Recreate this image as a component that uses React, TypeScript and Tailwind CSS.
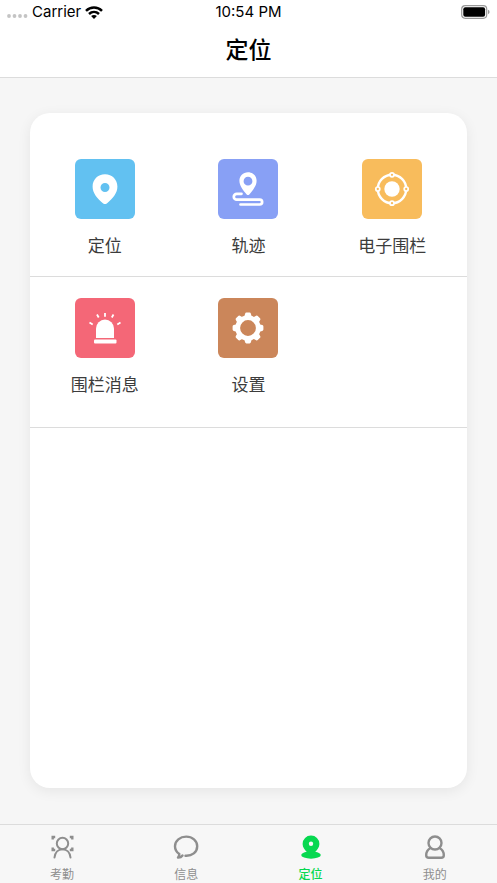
import React from 'react';

const LocateIcon = () => (
  <svg viewBox="0 0 60 60" className="size-15" aria-hidden="true">
    <path
      fill="#fff"
      fillRule="evenodd"
      d="M30 15.200c-7.200 0-12.400 5.400-12.400 12.300 0 6.600 4.300 11.600 10.600 16.900q1.800 1.300 3.600 0c6.300-5.300 10.600-10.300 10.600-16.900 0-6.900-5.200-12.300-12.400-12.300zM30 24a4.500 4.500 0 1 1 0 9 4.500 4.500 0 0 1 0-9z"
    />
  </svg>
);

const TrackIcon = () => (
  <svg viewBox="0 0 60 60" className="size-15" aria-hidden="true">
    <path
      fill="#fff"
      fillRule="evenodd"
      d="M30 13.200c-5 0-8.600 3.700-8.600 8.500 0 4.800 3.500 9.400 7.300 13.700q1.300 1.200 2.600 0c3.800-4.300 7.300-8.900 7.300-13.700 0-4.800-3.600-8.500-8.600-8.500zM30 17.800a4.400 4.400 0 1 1 0 8.800 4.400 4.400 0 0 1 0-8.800z"
    />
    <path
      fill="none"
      stroke="#fff"
      strokeWidth="2.700"
      strokeLinecap="round"
      d="M23.500 34.800h-4.800a2.900 2.900 0 0 0 0 5.800h23a2.400 2.400 0 0 1 0 4.900H22.500"
    />
  </svg>
);

const FenceIcon = () => (
  <svg viewBox="0 0 60 60" className="size-15" aria-hidden="true">
    <circle cx="30" cy="30" r="7.700" fill="#fff" />
    <circle cx="30" cy="30" r="14.200" fill="none" stroke="#fff" strokeWidth="2.400" />
    <g fill="#f8bc5c" stroke="#fff" strokeWidth="1.700">
      <circle cx="30" cy="15.800" r="2" />
      <circle cx="44.200" cy="30" r="2" />
      <circle cx="30" cy="44.200" r="2" />
      <circle cx="15.800" cy="30" r="2" />
    </g>
  </svg>
);

const AlarmIcon = () => (
  <svg viewBox="0 0 60 60" className="size-15" aria-hidden="true">
    <path fill="#fff" d="M21 40v-9.500a9 9 0 0 1 18 0V40z" />
    <rect x="19" y="41.600" width="22.500" height="3.900" rx="1" fill="#fff" />
    <path
      stroke="#fff"
      strokeWidth="1.800"
      d="M30 15v3.800M22 16.500l1.700 3M38.500 16.500L36.800 19.500M14.500 24.500l3.200 2M45.500 24.500l-3.200 2"
    />
  </svg>
);

const SettingsIcon = () => (
  <svg viewBox="0 0 60 60" className="size-15" aria-hidden="true">
    <circle cx="30" cy="30" r="10.300" fill="none" stroke="#fff" strokeWidth="4.800" />
    <g fill="#fff">
      {[0, 45, 90, 135, 180, 225, 270, 315].map((angle) => (
        <path key={angle} transform={`rotate(${angle} 30 30)`} d="M26.200 19l.9-3.300q.3-1.100 1.300-1.100h3.200q1 0 1.300 1.100l.9 3.300z" />
      ))}
    </g>
  </svg>
);

const AttendanceIcon = () => (
  <svg viewBox="0 0 24 24" className="size-6" fill="none" stroke="currentColor" strokeWidth="2" aria-hidden="true">
    <circle cx="12.500" cy="8.500" r="5.700" />
    <path strokeLinecap="round" d="M4.500 22.500c.5-5 3.800-8.300 8-8.300s7.500 3.300 8 8.300" />
    <path strokeWidth="2.400" d="M2.700 4.500V2h2.500M22.300 4.500V2h-2.500M2.700 12.500V15h2.500M22.300 12.500V15h-2.500" />
  </svg>
);

const MessageIcon = () => (
  <svg viewBox="0 0 26 24" className="h-6 w-6.5" fill="none" stroke="currentColor" strokeWidth="2.400" strokeLinecap="round" strokeLinejoin="round" aria-hidden="true">
    <path d="M12.500 20.700c6.500.4 11.700-3.500 11.700-9.500C24.200 5.600 19.300 1.600 13.200 1.600S2 5.600 2 11.200c0 3.200 1.600 6 4.300 7.700.2 1.500-.3 2.500-1.300 3.600 2 .1 3.500-.6 4.500-2" />
  </svg>
);

const PositionIcon = () => (
  <svg viewBox="0 0 24 24" className="size-6" fill="currentColor" aria-hidden="true">
    <ellipse cx="12" cy="20" rx="9.800" ry="3.700" />
    <path
      fillRule="evenodd"
      d="M12 .5a8.300 8.300 0 0 0-8.400 8.400c0 3.600 2.300 6 4.400 8.100l4 4 4-4c2.100-2.100 4.400-4.500 4.400-8.100A8.300 8.300 0 0 0 12 .5zm0 6a2.200 2.200 0 1 1 0 4.400 2.200 2.200 0 0 1 0-4.400z"
    />
  </svg>
);

const MineIcon = () => (
  <svg viewBox="0 0 24 24" className="size-6" fill="none" stroke="currentColor" strokeWidth="2.400" strokeLinejoin="round" aria-hidden="true">
    <circle cx="12" cy="8" r="6.500" />
    <path d="M7.200 13.200C4.400 14.700 3.200 17 3.200 20.200q0 2.600 2.600 2.600h12.400q2.600 0 2.600-2.600c0-3.200-1.200-5.500-4-7" />
  </svg>
);

const menuRows = [
  {
    className: 'pt-[46px] pb-4',
    items: [
      { label: '定位', color: 'bg-[#62c1f1]', icon: <LocateIcon /> },
      { label: '轨迹', color: 'bg-[#88a0f5]', icon: <TrackIcon /> },
      { label: '电子围栏', color: 'bg-[#f8bc5c]', icon: <FenceIcon /> },
    ],
  },
  {
    className: 'pt-[21px] pb-7',
    items: [
      { label: '围栏消息', color: 'bg-[#f46777]', icon: <AlarmIcon /> },
      { label: '设置', color: 'bg-[#cb865a]', icon: <SettingsIcon /> },
    ],
  },
];

const tabs = [
  { label: '考勤', icon: <AttendanceIcon /> },
  { label: '信息', icon: <MessageIcon /> },
  { label: '定位', icon: <PositionIcon />, active: true },
  { label: '我的', icon: <MineIcon /> },
];

const StatusBar: React.FC = () => (
  <div className="grid h-6 grid-cols-3 items-center px-[7px] font-[Inter,sans-serif] text-[15px]">
    <div className="flex items-center">
      <svg viewBox="0 0 21 4" className="mt-2 mr-1 h-1 w-[21px]" fill="#c4c4c4" aria-hidden="true">
        <circle cx="2" cy="2" r="1.900" />
        <circle cx="7.500" cy="2" r="1.900" />
        <circle cx="13" cy="2" r="1.900" />
        <circle cx="18.500" cy="2" r="1.900" />
      </svg>
      <span>Carrier</span>
      <svg viewBox="0 0 18 13" className="ml-1 h-[13px] w-[18px]" fill="none" stroke="#000" strokeWidth="2.500" aria-hidden="true">
        <path d="M1 4.800c4.500-4.400 11.500-4.400 16 0M4 8c2.900-2.700 7.100-2.700 10 0" />
        <path fill="#000" stroke="none" d="M9 13l-2.900-2.900c1.700-1.500 4.100-1.500 5.800 0z" />
      </svg>
    </div>
    <span className="text-center whitespace-nowrap">10:54 PM</span>
    <svg viewBox="0 0 29 14" className="h-3.5 w-[29px] justify-self-end" aria-hidden="true">
      <rect x=".7" y=".7" width="25" height="12.600" rx="3.500" fill="none" stroke="#999" strokeWidth="1.200" />
      <rect x="2.300" y="2.300" width="21.800" height="9.400" rx="2" fill="#000" />
      <path fill="#999" d="M27 4.800q1.600.6 1.600 2.200T27 9.200z" />
    </svg>
  </div>
);

const App: React.FC = () => {
  return (
    <div className="flex min-h-screen flex-col bg-[#f6f6f6] font-['Liberation_Sans','Noto_Sans_CJK_SC',sans-serif] text-black">
      <header className="border-b border-[#dcdcdc] bg-white">
        <StatusBar />
        <h1 className="pt-2 pb-3 text-center text-[23px] leading-[33px] font-medium font-['Noto_Sans_CJK_SC',sans-serif]">定位</h1>
      </header>

      <main className="flex flex-1 flex-col px-[30px] pt-[35px] pb-9">
        <div className="flex-1 rounded-[20px] bg-white shadow-[0_3px_14px_rgba(0,0,0,0.07)]">
          {menuRows.map((row, index) => (
            <div key={index} className={`grid grid-cols-3 border-b border-[#dcdcdc] px-[3px] ${row.className}`}>
              {row.items.map((item) => (
                <button key={item.label} type="button" className="flex flex-col items-center gap-[15px]">
                  <span className={`rounded-md ${item.color}`}>{item.icon}</span>
                  <span className="text-[17px] leading-[26px] text-[#3c3c3c]">{item.label}</span>
                </button>
              ))}
            </div>
          ))}
        </div>
      </main>

      <nav className="grid grid-cols-4 border-t border-[#dcdcdc] bg-[#f7f7f7] pt-2.5">
        {tabs.map((tab) => (
          <a
            key={tab.label}
            href="#"
            aria-current={tab.active ? 'page' : undefined}
            className={`flex flex-col items-center gap-2 text-xs leading-4 ${tab.active ? 'font-medium text-[#07d850]' : 'text-[#8e8e8e]'}`}
          >
            {tab.icon}
            <span>{tab.label}</span>
          </a>
        ))}
      </nav>
    </div>
  );
};

export default App;
